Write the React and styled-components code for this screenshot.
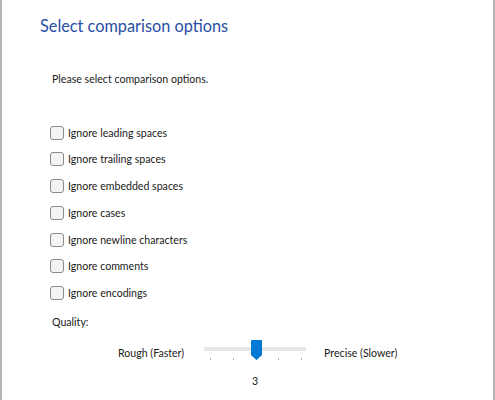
import React, { useState } from "react";
import styled, { createGlobalStyle } from "styled-components";

const GlobalStyle = createGlobalStyle`
  html, body {
    margin: 0;
    padding: 0;
    background: #ffffff;
  }
  body {
    font-family: Lato, "Noto Sans", sans-serif;
  }
`;

const Page = styled.div`
  box-sizing: border-box;
  width: 495px;
  height: 400px;
  border-left: 2px solid #b4b4b4;
  border-right: 2px solid #b4b4b4;
  background: #ffffff;
  padding: 14px 0 0 38px;
  color: #1a1a1a;
`;

const Title = styled.h1`
  margin: 0;
  font-size: 16.3px;
  font-weight: 400;
  color: #2a4ea6;
  line-height: 24px;
`;

const Intro = styled.p`
  margin: 34px 0 0 12px;
  font-size: 10.6px;
  line-height: 15px;
`;

const OptionList = styled.div`
  display: flex;
  flex-direction: column;
  gap: 11.8px;
  margin: 38px 0 0 10px;
`;

const Option = styled.label`
  display: flex;
  align-items: center;
  gap: 4px;
  height: 15px;
  font-size: 10.6px;
  cursor: pointer;
`;

const Box = styled.span`
  box-sizing: border-box;
  width: 14px;
  height: 14px;
  border: 1px solid #8a8a8a;
  border-radius: 3px;
  background: ${({ checked }) => (checked ? "#0078d4" : "#f4f4f4")};
  display: flex;
  align-items: center;
  justify-content: center;
  color: #fff;
  font-size: 10px;
`;

const QualityLabel = styled.div`
  margin: 14px 0 0 12px;
  font-size: 10.6px;
  line-height: 15px;
`;

const SliderRow = styled.div`
  display: flex;
  align-items: center;
  margin: 11px 0 0 78px;
  font-size: 10.6px;
`;

const SliderTrack = styled.div`
  position: relative;
  width: 102px;
  height: 24px;
  margin: 0 18px 0 20px;
`;

const Rail = styled.div`
  position: absolute;
  left: 0;
  right: 0;
  top: 6px;
  height: 4px;
  background: #e6e6e6;
`;

const Tick = styled.span`
  position: absolute;
  top: 17px;
  width: 1px;
  height: 2px;
  background: #b0b0b0;
`;

const Thumb = styled.svg`
  position: absolute;
  top: -1px;
`;

const Value = styled.div`
  margin: 10px 0 0 212px;
  font-size: 10.6px;
`;

const options = [
  "Ignore leading spaces",
  "Ignore trailing spaces",
  "Ignore embedded spaces",
  "Ignore cases",
  "Ignore newline characters",
  "Ignore comments",
  "Ignore encodings",
];

export default function App() {
  const [checked, setChecked] = useState({});
  const value = 3;
  const pos = ((value - 1) / 4) * 91 + 6;
  return (
    <>
      <GlobalStyle />
      <Page>
        <Title>Select comparison options</Title>
        <Intro>Please select comparison options.</Intro>
        <OptionList>
          {options.map((o) => (
            <Option key={o} onClick={() => setChecked({ ...checked, [o]: !checked[o] })}>
              <Box checked={checked[o]}>{checked[o] ? "✓" : ""}</Box>
              {o}
            </Option>
          ))}
        </OptionList>
        <QualityLabel>Quality:</QualityLabel>
        <SliderRow>
          <span>Rough (Faster)</span>
          <SliderTrack>
            <Rail />
            {[0, 1, 2, 3, 4].map((i) => (
              <Tick key={i} style={{ left: 6 + i * 22.75 }} />
            ))}
            <Thumb width="11" height="20" viewBox="0 0 11 20" style={{ left: pos - 5 }}>
              <path d="M1 0 H10 A1 1 0 0 1 11 1 V15 L5.5 20 L0 15 V1 A1 1 0 0 1 1 0 Z" fill="#0078d4" />
            </Thumb>
          </SliderTrack>
          <span>Precise (Slower)</span>
        </SliderRow>
        <Value>3</Value>
      </Page>
    </>
  );
}
